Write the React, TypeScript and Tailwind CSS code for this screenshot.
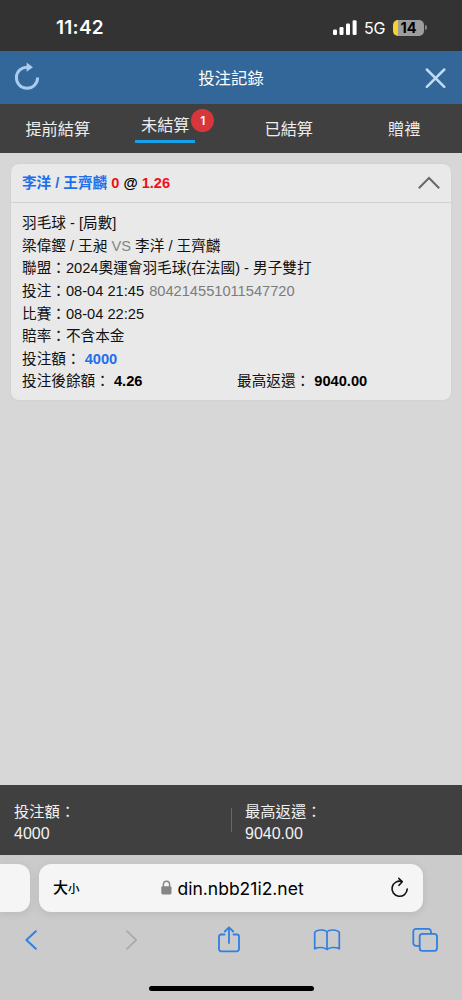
import type { ReactNode } from "react";

function StatusBar() {
  return (
    <div className="flex h-[51px] shrink-0 items-center bg-[#333333] pl-14 pr-[35px] pt-1 text-white">
      <span className="font-['Inter',sans-serif] text-[19px] font-semibold leading-6 tracking-[0.25px]">11:42</span>
      <svg className="ml-auto shrink-0" width="24" height="16" viewBox="0 0 24 16" fill="white">
        <rect x="0" y="9.5" width="4" height="5.5" rx="1.2" />
        <rect x="6.5" y="7" width="4" height="8" rx="1.2" />
        <rect x="13" y="3.5" width="4" height="11.5" rx="1.2" />
        <rect x="19.6" y="0.3" width="4" height="14.7" rx="1.2" />
      </svg>
      <span className="ml-[7px] w-[23px] font-['Inter',sans-serif] text-[16px] leading-5 tracking-[-0.3px]">5G</span>
      <div className="ml-[6px] flex h-[16px] w-[31px] shrink-0 items-center justify-center rounded-[5px] bg-[linear-gradient(90deg,#f5d02e_0_5px,#9d9d9d_5px)] font-['Inter',sans-serif] text-[14.5px] font-bold leading-[16px] text-black">
        14
      </div>
      <div className="ml-[1px] h-[5px] w-[2px] shrink-0 rounded-r-full bg-[#858585]" />
    </div>
  );
}

function Header() {
  return (
    <div className="flex h-[53px] shrink-0 items-center justify-between bg-[#33679a] pl-[13px] pr-[13px]">
      <svg width="28" height="32" viewBox="0 0 28 32" fill="none">
        <path d="M15 5.2A10.6 10.6 0 1 0 24.600 15.500" stroke="#a9cbed" strokeWidth="3" />
        <path d="M13.600 0.600L20 5.200L13.600 9.800Z" fill="#a9cbed" />
      </svg>
      <h1 className="text-[16.4px] leading-6 text-white">投注記錄</h1>
      <svg width="28" height="28" viewBox="0 0 28 28" stroke="#c0daf3" strokeWidth="2.5" strokeLinecap="round">
        <path d="M5.8 5.5L23.3 22.8M23.3 5.5L5.8 22.8" />
      </svg>
    </div>
  );
}

function Tabs() {
  return (
    <div className="grid h-[49px] shrink-0 grid-cols-4 bg-[#404040] text-[16.2px] leading-6 text-[#eeeeee]">
      <div className="flex items-center justify-center">提前結算</div>
      <div className="flex justify-center gap-[1px] pl-[3px] pt-[5px]">
        <div className="flex flex-col items-center">
          <span className="pt-1 leading-6">未結算</span>
          <span className="mt-[3px] h-[3px] w-[60px] bg-[#16a0e8]" />
        </div>
        <span className="-ml-[5px] flex size-[23px] items-center justify-center rounded-full bg-[#d7363b] font-['Inter',sans-serif] text-[12px] font-semibold leading-none text-white">
          1
        </span>
      </div>
      <div className="flex items-center justify-center">已結算</div>
      <div className="flex items-center justify-center">贈禮</div>
    </div>
  );
}

function Line({ children }: { children: ReactNode }) {
  return <div className="h-[22.65px] whitespace-nowrap leading-[22.65px]">{children}</div>;
}

function BetCard() {
  return (
    <div className="mx-[11px] mt-[11px] flex h-[236px] flex-col rounded-[8px] bg-[#e9e9e9] text-[14.65px] text-[#111111] shadow-[0_0_2px_#c8c8c8]">
      <div className="flex h-[39px] shrink-0 items-center justify-between border-b border-[#d2d2d2] pl-[11px] pr-[11px]">
        <div className="whitespace-nowrap text-[14.6px] font-bold leading-6 text-[#f01018]">
          <span className="text-[#1f6feb]">李洋 / 王齊麟</span> 0 <span className="text-black">@</span> 1.26
        </div>
        <svg width="22" height="14" viewBox="0 0 22 14" fill="none" stroke="#686868" strokeWidth="2">
          <path d="M0.8 12.3L11 2L21.2 12.3" />
        </svg>
      </div>
      <div className="px-[11px] pt-[9px]">
        <Line>羽毛球 - [局數]</Line>
        <Line>
          梁偉鏗 / 王昶 <span className="text-[#858585]">VS</span> 李洋 / 王齊麟
        </Line>
        <Line>聯盟：2024奧運會羽毛球(在法國) - 男子雙打</Line>
        <Line>
          投注：08-04 21:45 <span className="ml-px text-[#7c7c7c]">804214551011547720</span>
        </Line>
        <Line>比賽：08-04 22:25</Line>
        <Line>賠率：不含本金</Line>
        <Line>
          投注額： <b className="text-[#1f6feb]">4000</b>
        </Line>
        <div className="flex">
          <div className="w-[215px]">
            <Line>
              投注後餘額： <b className="text-black">4.26</b>
            </Line>
          </div>
          <Line>
            最高返還： <b className="text-black">9040.00</b>
          </Line>
        </div>
      </div>
    </div>
  );
}

function Totals() {
  return (
    <div className="flex h-[70px] shrink-0 items-center bg-[#404040] text-[15.3px] leading-[22px] text-[#f2f2f2]">
      <div className="w-[231px] pl-[14px] pt-[5px]">
        <div>投注額：</div>
        <div className="text-[16px]">4000</div>
      </div>
      <div className="h-[24px] w-px bg-[#666666]" />
      <div className="pl-[13px] pt-[5px]">
        <div>最高返還：</div>
        <div className="text-[16px]">9040.00</div>
      </div>
    </div>
  );
}

function BrowserBar() {
  return (
    <div className="flex h-[145px] shrink-0 flex-col bg-[#cbcbcb] pt-[9px]">
      <div className="flex h-[48px] gap-[9px]">
        <div className="w-[30px] rounded-r-[12px] bg-[#f5f5f5] shadow-[0_2px_9px_#00000018]" />
        <div className="flex w-[384px] items-center rounded-[12px] bg-[#f5f5f5] pl-[14px] pr-[14px] text-black shadow-[0_2px_9px_#00000018]">
          <div className="flex items-baseline font-medium leading-6">
            <span className="text-[15px]">大</span>
            <span className="text-[11.5px]">小</span>
          </div>
          <svg className="ml-[81px]" width="11" height="16" viewBox="0 0 11 16" fill="none">
            <path d="M2.4 7V4.4a3.1 3.1 0 0 1 6.2 0V7" stroke="#858585" strokeWidth="1.4" />
            <rect x="0.3" y="6.2" width="10.2" height="8.3" rx="1.4" fill="#858585" />
          </svg>
          <span className="ml-[6px] pt-px font-['Inter',sans-serif] text-[17.5px] leading-6">din.nbb21i2.net</span>
          <svg className="ml-auto" width="19" height="22" viewBox="0 0 19 22" fill="none" stroke="#111" strokeWidth="1.6" strokeLinecap="round" strokeLinejoin="round">
            <path d="M12 4.5A7.6 7.6 0 1 0 17.2 12" />
            <path d="M8.8 1.4L12.2 4.7L9 8.3" />
          </svg>
        </div>
      </div>
      <div className="flex h-[56px] items-center pl-[22px] text-[#307fe2]">
        <svg width="18" height="28" viewBox="0 0 18 28" fill="none" stroke="currentColor" strokeWidth="2" strokeLinecap="round" strokeLinejoin="round">
          <path d="M13.8 5.2L4.4 14L13.8 22.8" />
        </svg>
        <svg className="ml-[82px]" width="18" height="28" viewBox="0 0 18 28" fill="none" stroke="#aaaaaa" strokeWidth="1.8" strokeLinecap="round" strokeLinejoin="round">
          <path d="M5 5.2L14.2 14L5 22.8" />
        </svg>
        <svg className="ml-[77px]" width="24" height="30" viewBox="0 0 24 30" fill="none" stroke="currentColor" strokeWidth="1.8" strokeLinecap="round" strokeLinejoin="round">
          <path d="M7.500 9.500H4a2 2 0 0 0-2 2V24a2.300 2.300 0 0 0 2.300 2.300h15.400A2.300 2.300 0 0 0 22 24V11.500a2 2 0 0 0-2-2h-3.500" />
          <path d="M12 18V2.500M7.800 6.500L12 2.300L16.200 6.500" />
        </svg>
        <svg className="ml-[72px]" width="28" height="28" viewBox="0 0 28 28" fill="none" stroke="currentColor" strokeWidth="1.700" strokeLinejoin="round">
          <path d="M14 6.300C13 3.600 4.500 2.900 1.700 6.200V22.800C5 20.900 11.500 21 14 23.500C16.500 21 23 20.900 26.300 22.800V6.200C23.500 2.900 15 3.600 14 6.300ZM14 6.300V23.500" />
        </svg>
        <svg className="ml-[71px]" width="26" height="28" viewBox="0 0 26 28" fill="none" stroke="currentColor" strokeWidth="1.800" strokeLinejoin="round">
          <rect x="7.700" y="7.900" width="17.300" height="17" rx="2.700" />
          <path d="M7.700 19.800H4a2.700 2.700 0 0 1-2.700-2.700V5.500A2.700 2.700 0 0 1 4 2.800H16.300A2.700 2.700 0 0 1 19 5.500V7.900" />
        </svg>
      </div>
      <div className="mt-[18px] ml-[149px] h-[5px] w-[165px] shrink-0 rounded-full bg-black" />
    </div>
  );
}

export default function App() {
  return (
    <main className="flex h-[1000px] w-[462px] flex-col overflow-hidden bg-[#d7d7d7] font-['Liberation_Sans','Noto_Sans_CJK_TC',sans-serif]">
      <StatusBar />
      <Header />
      <Tabs />
      <div className="flex-1">
        <BetCard />
      </div>
      <Totals />
      <BrowserBar />
    </main>
  );
}
